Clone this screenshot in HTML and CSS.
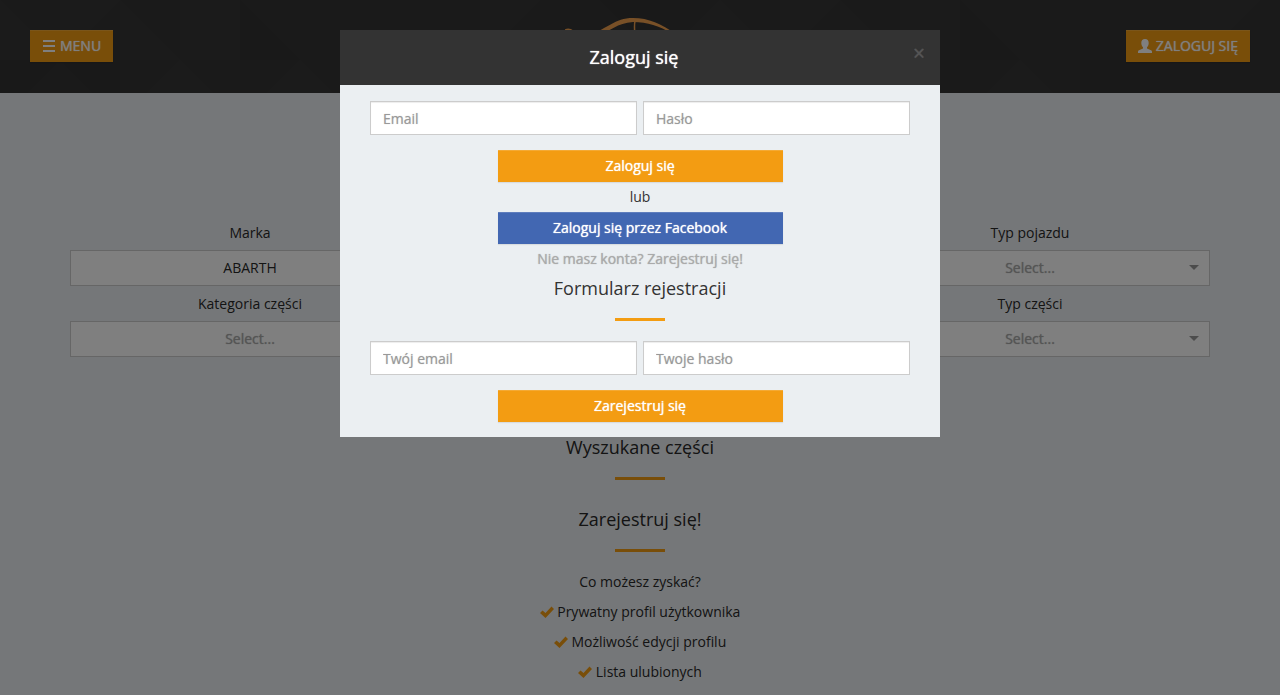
FILE: index.html
```html
<!DOCTYPE html>
<html lang="pl">
<head>
<meta charset="utf-8">
<title>Zaloguj się</title>
<meta name="viewport" content="width=device-width, initial-scale=1">
<link rel="stylesheet" href="styles.css">
</head>
<body>
<header class="site-header">
  <svg class="header-pattern" aria-hidden="true">
    <defs>
      <pattern id="triangles" width="720" height="120" patternUnits="userSpaceOnUse">
        <rect width="720" height="120" fill="#343434"/>
        <g fill="#373737">
          <path d="M0 0L60 60H0zM60 0H120L60 60zM120 0L180 60H120zM180 0H240V60H180zM480 0H540L480 60zM660 60L720 0V60z"/>
          <path d="M180 60L213 93H147zM300 60L333 93H267zM660 60L720 120H600z"/>
        </g>
        <g fill="#323232">
          <path d="M0 60H60L27 93H0zM60 60H120V120zM240 0L300 60H240zM600 0H660V60zM360 60H420V120H360z"/>
        </g>
      </pattern>
    </defs>
    <rect width="100%" height="100%" fill="url(#triangles)"/>
  </svg>
  <button class="btn btn-orange" type="button">
    <svg class="icon" viewBox="0 0 14 14" aria-hidden="true"><path fill="currentColor" d="M1 1h12v2H1zM1 6h12v2H1zM1 11h12v2H1z"/></svg>
    MENU
  </button>
  <svg class="logo" viewBox="0 0 150 63" role="img" aria-label="Logo">
    <path fill="#f0a04e" d="M25 19C43 14 49 3 68 3C84 3 96 9 111 19L106 18C94 11 83 7 68 7C52 8 46 16 29 22z"/>
    <path fill="none" stroke="#f0a04e" stroke-width="1.5" d="M70 6Q69 10 70 22M0 15Q4 13 8 16"/>
  </svg>
  <button class="btn btn-orange" type="button">
    <svg class="icon" viewBox="0 0 14 14" aria-hidden="true"><path fill="currentColor" d="M7 0c2.400 0 3.700 1.500 3.700 4 0 1.800-.7 3.300-1.700 4.300v1.200l4 1.700c.7.300 1 .8 1 1.500V14H0v-1.300c0-.7.300-1.200 1-1.500l4-1.700V8.300C4 7.300 3.300 5.800 3.300 4c0-2.500 1.300-4 3.700-4z"/></svg>
    ZALOGUJ SIĘ
  </button>
</header>

<main class="page">
  <form class="filters">
    <div class="field first">
      <label for="brand">Marka</label>
      <div class="select-box"><select id="brand" class="chosen"><option>ABARTH</option></select></div>
    </div>
    <div class="field last">
      <label for="vehicle">Typ pojazdu</label>
      <div class="select-box"><select id="vehicle"><option>Select...</option></select></div>
    </div>
    <div class="field first">
      <label for="category">Kategoria części</label>
      <div class="select-box"><select id="category"><option>Select...</option></select></div>
    </div>
    <div class="field last">
      <label for="part">Typ części</label>
      <div class="select-box"><select id="part"><option>Select...</option></select></div>
    </div>
  </form>

  <section class="found">
    <h2 class="heading">Wyszukane części</h2>
  </section>
  <section class="perks">
    <h2 class="heading">Zarejestruj się!</h2>
    <p>Co możesz zyskać?</p>
    <ul>
      <li><svg class="icon check" viewBox="0 0 14 14" aria-hidden="true"><path fill="#f39c12" d="M0 8L2.500 5.500L5.500 8L11.500 1.500L14 4L5.500 13z"/></svg> Prywatny profil użytkownika</li>
      <li><svg class="icon check" viewBox="0 0 14 14" aria-hidden="true"><path fill="#f39c12" d="M0 8L2.500 5.500L5.500 8L11.500 1.500L14 4L5.500 13z"/></svg> Możliwość edycji profilu</li>
      <li><svg class="icon check" viewBox="0 0 14 14" aria-hidden="true"><path fill="#f39c12" d="M0 8L2.500 5.500L5.500 8L11.500 1.500L14 4L5.500 13z"/></svg> Lista ulubionych</li>
    </ul>
  </section>
</main>

<div class="backdrop">
  <div class="modal" role="dialog" aria-modal="true" aria-labelledby="modal-title">
    <div class="modal-header">
      <h1 id="modal-title">Zaloguj się</h1>
      <button class="close" type="button" aria-label="Zamknij">×</button>
    </div>
    <div class="modal-body">
      <form class="account-form">
        <div class="inputs">
          <input type="email" placeholder="Email" aria-label="Email">
          <input type="password" placeholder="Hasło" aria-label="Hasło">
        </div>
        <button class="btn btn-orange wide" type="button">Zaloguj się</button>
        <span>lub</span>
        <button class="btn btn-blue wide" type="button">Zaloguj się przez Facebook</button>
        <a class="register-link" href="#register">Nie masz konta? Zarejestruj się!</a>
      </form>
      <form class="account-form" id="register">
        <h2 class="heading">Formularz rejestracji</h2>
        <div class="inputs">
          <input type="email" placeholder="Twój email" aria-label="Twój email">
          <input type="password" placeholder="Twoje hasło" aria-label="Twoje hasło">
        </div>
        <button class="btn btn-orange wide" type="button">Zarejestruj się</button>
      </form>
    </div>
  </div>
</div>
</body>
</html>
```

FILE: styles.css
```css
* { box-sizing: border-box; }

html { overflow: hidden; }

body {
  margin: 0;
  background: #ebeff2;
  color: #333;
  font: 14px/30px "Open Sans", sans-serif;
  text-align: center;
}

h1, h2, p, ul { margin: 0; padding: 0; }
ul { list-style: none; }
button, input, select { font: inherit; border-radius: 0; }

.site-header {
  position: relative;
  display: flex;
  justify-content: space-between;
  align-items: flex-start;
  padding: 15px 30px;
  background: #343434;
}

.header-pattern {
  position: absolute;
  inset: 0;
  width: 100%;
  height: 100%;
}

.logo {
  position: absolute;
  left: 50%;
  top: 15px;
  width: 150px;
  height: 63px;
  margin-left: -75px;
}

.btn {
  border: 0;
  padding: 1px 12px;
  color: #fff;
  line-height: 30px;
  text-shadow: 0 0 1px currentColor;
  box-shadow: inset 0 1px rgba(255, 255, 255, .15), 0 1px 1px rgba(0, 0, 0, .08);
}

.site-header .btn {
  position: relative;
  display: flex;
  align-items: center;
  gap: 4px;
  margin: 15px 0 16px;
}

.btn-orange { background: #f39c12; }
.btn-blue { background: #4267b2; }

.icon { width: 14px; height: 14px; }
.check { vertical-align: -2px; }

.page {
  max-width: 1170px;
  margin: 0 auto;
  padding: 122px 15px 0;
  color: #282828;
}

.filters {
  display: grid;
  grid-template-columns: repeat(3, 1fr);
  column-gap: 30px;
}

.first { grid-column: 1; }
.last { grid-column: 3; }
.field label { display: block; line-height: 35px; }

.select-box { position: relative; }

.select-box::after {
  content: "";
  position: absolute;
  right: 11px;
  top: 15px;
  border: 5px solid transparent;
  border-top-color: #999;
  border-bottom: 0;
}

select {
  appearance: none;
  display: block;
  width: 100%;
  height: 36px;
  padding: 0;
  border: 1px solid #ccc;
  background: #fff;
  color: #aaa;
  text-align: center;
  text-align-last: center;
  text-shadow: 0 0 1px currentColor;
}

.chosen { color: #282828; text-shadow: none; }

.found { padding-top: 76px; }
.perks { padding-top: 25px; }
.perks .heading { margin-bottom: 15px; }

.heading {
  font-size: 18px;
  font-weight: 400;
  line-height: 28px;
}

.heading::after {
  content: "";
  display: block;
  width: 50px;
  height: 3px;
  margin: 16px auto 0;
  background: #f39c12;
}

.backdrop {
  position: fixed;
  inset: 0;
  padding-top: 30px;
  background: rgba(0, 0, 0, .5);
}

.modal {
  max-width: 600px;
  margin: 0 auto;
  background: #ebeff2;
}

.modal-header {
  display: flex;
  align-items: center;
  padding: 0 15px;
  background: #333;
  color: #fff;
}

.modal-header h1 {
  flex: 1;
  font-size: 18px;
  font-weight: 400;
  line-height: 55px;
  text-shadow: 0 0 1px currentColor;
}

.close {
  border: 0;
  padding: 0 0 8px;
  background: none;
  color: #555;
  font-size: 21px;
  line-height: 21px;
  text-shadow: 0 0 1px currentColor;
}

.modal-body { padding: 16px 30px 15px; }

.account-form {
  display: flex;
  flex-direction: column;
  align-items: center;
}

.inputs {
  display: grid;
  grid-template-columns: 1fr 1fr;
  gap: 6px;
  width: 100%;
  margin-bottom: 15px;
}

.account-form .heading { margin-bottom: 20px; }

input {
  min-width: 0;
  height: 34px;
  padding: 6px 12px;
  border: 1px solid #ccc;
  background: #fff;
  line-height: 20px;
  box-shadow: inset 0 1px 1px rgba(0, 0, 0, .075);
}

input::placeholder { color: #999; opacity: 1; text-shadow: 0 0 1px rgba(153, 153, 153, .6); }

.wide { width: 100%; max-width: 285px; }

.register-link {
  color: #aaa;
  text-decoration: none;
  text-shadow: 0 0 1px currentColor;
}
```
